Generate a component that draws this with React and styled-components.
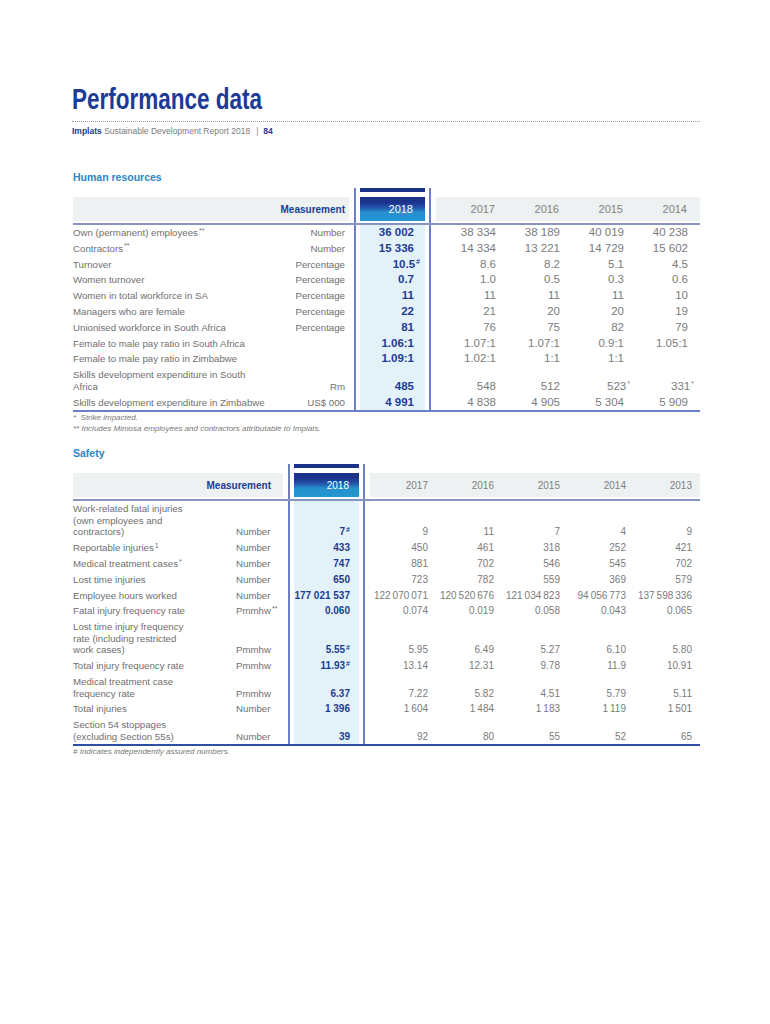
import React from 'react';
import styled, { createGlobalStyle } from 'styled-components';

const NAVY = '#1d3b95';
const SKY = '#2a86c8';
const GREY_TXT = '#6f6f6f';
const VAL_TXT = '#7b7b7b';
const LINE = '#6d7ec4';
const HEAD_BG = '#edf1f1';
const HI_BG = '#e2f2f8';

const GlobalStyle = createGlobalStyle`
  html, body { margin: 0; padding: 0; background: #fff; }
  body { font-family: "Liberation Sans", Arial, sans-serif; }
`;

const Page = styled.div`
  width: 770px;
  min-height: 1024px;
  box-sizing: border-box;
  padding: 84px 0 0 72px;
`;

const TitleWrap = styled.div`
  height: 30px;
`;

const Title = styled.h1`
  display: inline-block;
  margin: 0;
  font-family: "Liberation Sans", Arial, sans-serif;
  font-weight: 700;
  font-size: 30px;
  line-height: 30px;
  color: ${NAVY};
  white-space: nowrap;
  transform: scaleX(0.75);
  transform-origin: left center;
`;

const DottedRule = styled.div`
  width: 628px;
  margin-top: 7px;
  border-top: 1px dotted #9a9a9a;
`;

const Subtitle = styled.div`
  margin-top: 4px;
  font-size: 8.5px;
  line-height: 10px;
  color: #7a7a7a;
`;

const Brand = styled.b`
  color: ${NAVY};
`;

const Sep = styled.span`
  margin: 0 5px 0 6px;
  color: #888;
`;

const SectionTitle = styled.h2`
  margin: ${(p) => p.$mt}px 0 0 1px;
  font-size: 10.5px;
  line-height: 14px;
  font-weight: 700;
  color: ${SKY};
`;

const Table = styled.div`
  margin: 4px 0 0 1px;
  width: 627px;
`;

const Body = styled.div`
  border-bottom: 2px solid ${(p) => p.$bottom};
`;

const Row = styled.div`
  display: grid;
  grid-template-columns: ${(p) => p.$cols};
  height: ${(p) => (p.$h ? `${p.$h}px` : 'auto')};
`;

const Blank = styled.div`
  grid-column: span 2;
`;

const Mid = styled.div`
  align-self: stretch;
  display: flex;
  margin: 0 5px;
  border-left: 2px solid ${LINE};
  border-right: 2px solid ${LINE};
  padding: 0 4px;
  min-width: 0;
`;

const TopBar = styled.div`
  flex: 1;
  align-self: flex-start;
  height: 4px;
  background: #1b318a;
`;

const MeasureHead = styled.div`
  grid-column: span 2;
  display: flex;
  align-items: center;
  justify-content: flex-end;
  padding-right: ${(p) => p.$pad}px;
  background: ${HEAD_BG};
  font-size: 10px;
  font-weight: 700;
  color: ${NAVY};
`;

const YearHiHead = styled.div`
  flex: 1;
  display: flex;
  align-items: center;
  justify-content: flex-end;
  padding-right: ${(p) => p.$pad}px;
  background: linear-gradient(
    to bottom,
    #1b318a 0%,
    #1b318a 20%,
    #2350a8 42%,
    #2590cd 64%,
    #2597d2 100%
  );
  color: #fff;
  font-size: ${(p) => p.$fs}px;
`;

const YearHead = styled.div`
  display: flex;
  align-items: center;
  justify-content: flex-end;
  padding-right: ${(p) => p.$pad}px;
  background: ${HEAD_BG};
  color: #808080;
  font-size: ${(p) => p.$fs}px;
`;

const Divider = styled.div`
  height: 2px;
  background: #8894c0;
`;

const Label = styled.div`
  align-self: end;
  padding: 2.1px 0;
  font-size: 9.7px;
  line-height: 11.6px;
  color: ${GREY_TXT};
  white-space: nowrap;
`;

const Measure = styled.div`
  align-self: end;
  padding: 2.1px ${(p) => p.$pad}px 2.1px 0;
  text-align: ${(p) => p.$align};
  font-size: 9.7px;
  line-height: 11.6px;
  color: ${GREY_TXT};
  white-space: nowrap;
`;

const HiCell = styled.div`
  flex: 1;
  display: flex;
  align-items: flex-end;
  justify-content: flex-end;
  padding: 2.1px ${(p) => p.$pad}px 2.1px 0;
  background: ${HI_BG};
  font-size: ${(p) => p.$fs}px;
  line-height: 11.6px;
  font-weight: 700;
  color: ${NAVY};
  white-space: nowrap;
`;

const Val = styled.div`
  align-self: end;
  text-align: right;
  padding: 2.1px ${(p) => p.$pad}px 2.1px 0;
  font-size: ${(p) => p.$fs}px;
  line-height: 11.6px;
  color: ${VAL_TXT};
  white-space: nowrap;
`;

const Sup = styled.span`
  font-size: 7px;
  line-height: 0;
  vertical-align: 0.5em;
  margin-left: 1px;
  margin-right: ${(p) => (p.$hang ? '-6px' : '0')};
`;

const Notes = styled.div`
  margin-left: 1px;
  font-size: 8px;
  line-height: 11px;
  font-style: italic;
  color: #777;
`;

const Rich = ({ text, hang }) => {
  const [main, sup] = text.split('^');
  return (
    <>
      {main}
      {sup && <Sup $hang={hang}>{sup}</Sup>}
    </>
  );
};

const Lines = ({ lines }) =>
  (Array.isArray(lines) ? lines : [lines]).map((l, i, arr) => (
    <React.Fragment key={i}>
      <Rich text={l} />
      {i < arr.length - 1 && <br />}
    </React.Fragment>
  ));

const DataTable = ({ cfg, rows }) => (
  <Table>
    <Row $cols={cfg.cols} $h={9}>
      <Blank />
      <Mid>
        <TopBar />
      </Mid>
    </Row>
    <Row $cols={cfg.cols} $h={24}>
      <MeasureHead $pad={cfg.headPad}>Measurement</MeasureHead>
      <Mid>
        <YearHiHead $pad={cfg.hiHeadPad} $fs={cfg.yearFs}>2018</YearHiHead>
      </Mid>
      {cfg.years.map((y) => (
        <YearHead key={y} $pad={cfg.yearPad} $fs={cfg.yearFs}>
          {y}
        </YearHead>
      ))}
      {cfg.filler && <YearHead />}
    </Row>
    <Row $cols={cfg.cols} $h={2}>
      <Blank />
      <Mid />
    </Row>
    <Divider />
    <Body $bottom={cfg.bottom}>
      {rows.map((r, i) => (
        <Row key={i} $cols={cfg.cols}>
          <Label>
            <Lines lines={r[0]} />
          </Label>
          <Measure $align={cfg.measureAlign} $pad={cfg.measurePad}>
            <Rich text={r[1]} />
          </Measure>
          <Mid>
            <HiCell $pad={cfg.hiPad} $fs={cfg.hiFs}>
              <span>
                <Rich text={r[2]} hang={cfg.hang} />
              </span>
            </HiCell>
          </Mid>
          {r[3].map((v, j) => (
            <Val key={j} $pad={cfg.valPad} $fs={cfg.valFs}>
              <Rich text={v} hang={cfg.hang} />
            </Val>
          ))}
        </Row>
      ))}
    </Body>
  </Table>
);

const HR_CFG = {
  cols: '196px 80px 87px repeat(4, 64px) 8px',
  years: ['2017', '2016', '2015', '2014'],
  filler: true,
  headPad: 4,
  hiHeadPad: 12,
  yearPad: 5,
  yearFs: 11,
  measureAlign: 'right',
  measurePad: 4,
  hiPad: 11,
  hiFs: 11.5,
  valPad: 4,
  valFs: 11.5,
  hang: true,
  bottom: '#6b80c8',
};

const SAFETY_CFG = {
  cols: '163px 47px 87px repeat(5, 66px)',
  years: ['2017', '2016', '2015', '2014', '2013'],
  filler: false,
  headPad: 12,
  hiHeadPad: 10,
  yearPad: 8,
  yearFs: 10,
  measureAlign: 'left',
  measurePad: 0,
  hiPad: 9,
  hiFs: 10,
  valPad: 8,
  valFs: 10,
  hang: false,
  bottom: '#2e4ea8',
};

const T = '\u2009';

const HR_ROWS = [
  ['Own (permanent) employees^**', 'Number', '36 002', ['38 334', '38 189', '40 019', '40 238']],
  ['Contractors^**', 'Number', '15 336', ['14 334', '13 221', '14 729', '15 602']],
  ['Turnover', 'Percentage', '10.5^#', ['8.6', '8.2', '5.1', '4.5']],
  ['Women turnover', 'Percentage', '0.7', ['1.0', '0.5', '0.3', '0.6']],
  ['Women in total workforce in SA', 'Percentage', '11', ['11', '11', '11', '10']],
  ['Managers who are female', 'Percentage', '22', ['21', '20', '20', '19']],
  ['Unionised workforce in South Africa', 'Percentage', '81', ['76', '75', '82', '79']],
  ['Female to male pay ratio in South Africa', '', '1.06:1', ['1.07:1', '1.07:1', '0.9:1', '1.05:1']],
  ['Female to male pay ratio in Zimbabwe', '', '1.09:1', ['1.02:1', '1:1', '1:1', '']],
  [['Skills development expenditure in South', 'Africa'], 'Rm', '485', ['548', '512', '523^*', '331^*']],
  ['Skills development expenditure in Zimbabwe', 'US$ 000', '4 991', ['4 838', '4 905', '5 304', '5 909']],
];

const SAFETY_ROWS = [
  [['Work-related fatal injuries', '(own employees and', 'contractors)'], 'Number', '7^#', ['9', '11', '7', '4', '9']],
  ['Reportable injuries^1', 'Number', '433', ['450', '461', '318', '252', '421']],
  ['Medical treatment cases^*', 'Number', '747', ['881', '702', '546', '545', '702']],
  ['Lost time injuries', 'Number', '650', ['723', '782', '559', '369', '579']],
  ['Employee hours worked', 'Number', '177 021 537', [`122${T}070${T}071`, `120${T}520${T}676`, `121${T}034${T}823`, `94${T}056${T}773`, `137${T}598${T}336`]],
  ['Fatal injury frequency rate', 'Pmmhw^**', '0.060', ['0.074', '0.019', '0.058', '0.043', '0.065']],
  [['Lost time injury frequency', 'rate (including restricted', 'work cases)'], 'Pmmhw', '5.55^#', ['5.95', '6.49', '5.27', '6.10', '5.80']],
  ['Total injury frequency rate', 'Pmmhw', '11.93^#', ['13.14', '12.31', '9.78', '11.9', '10.91']],
  [['Medical treatment case', 'frequency rate'], 'Pmmhw', '6.37', ['7.22', '5.82', '4.51', '5.79', '5.11']],
  ['Total injuries', 'Number', '1 396', [`1${T}604`, `1${T}484`, `1${T}183`, `1${T}119`, `1${T}501`]],
  [['Section 54 stoppages', '(excluding Section 55s)'], 'Number', '39', ['92', '80', '55', '52', '65']],
];

export default function App() {
  return (
    <>
      <GlobalStyle />
      <Page>
        <TitleWrap>
          <Title>Performance data</Title>
        </TitleWrap>
        <DottedRule />
        <Subtitle>
          <Brand>Implats</Brand> Sustainable Development Report 2018<Sep>|</Sep>
          <Brand>84</Brand>
        </Subtitle>

        <SectionTitle $mt={34}>Human resources</SectionTitle>
        <DataTable cfg={HR_CFG} rows={HR_ROWS} />
        <Notes>
          *&nbsp;&nbsp;Strike impacted.
          <br />
          ** Includes Mimosa employees and contractors attributable to Implats.
        </Notes>

        <SectionTitle $mt={12}>Safety</SectionTitle>
        <DataTable cfg={SAFETY_CFG} rows={SAFETY_ROWS} />
        <Notes># Indicates independently assured numbers.</Notes>
      </Page>
    </>
  );
}
